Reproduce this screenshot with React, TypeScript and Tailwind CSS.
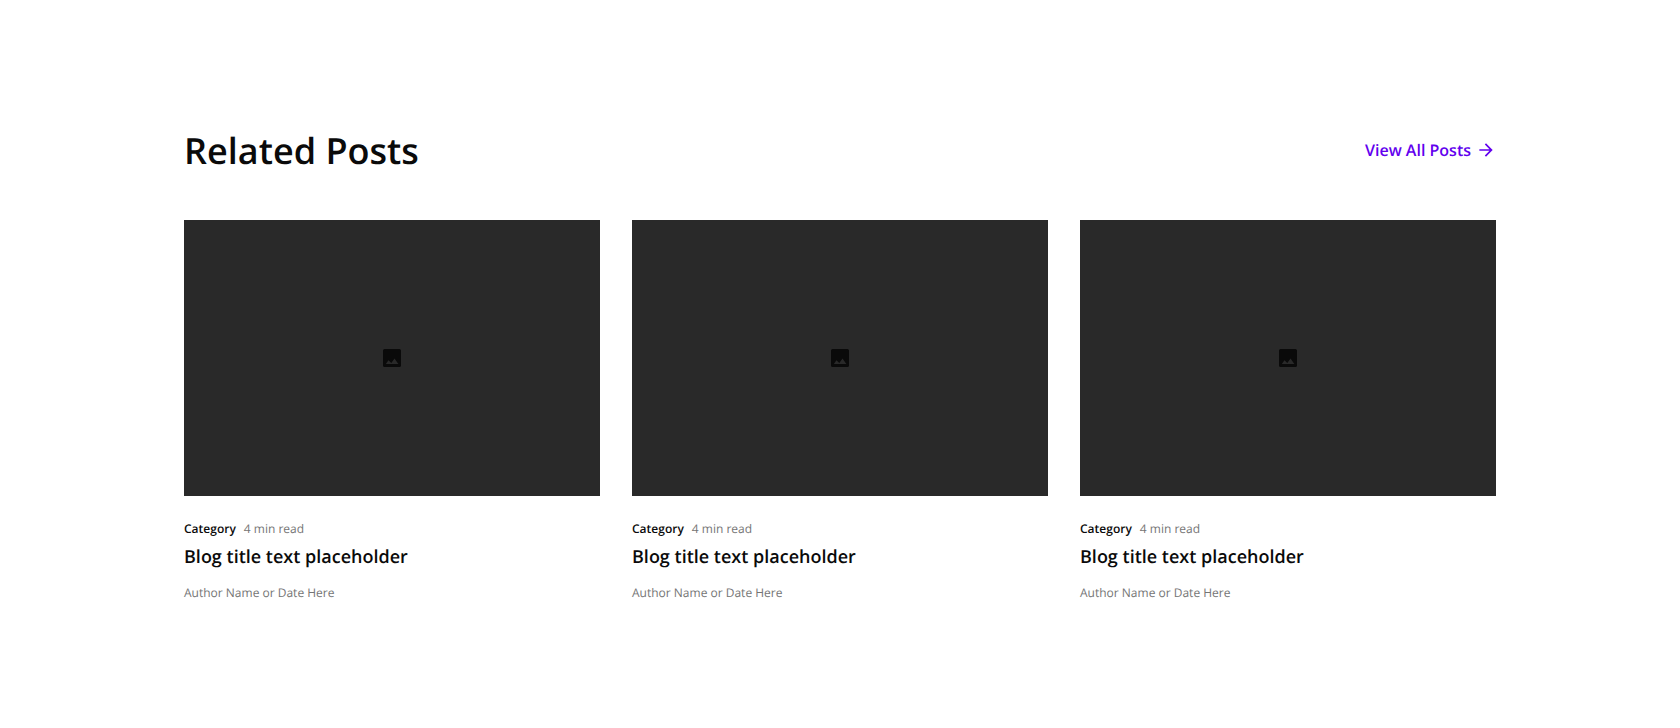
import React from "react";

function ImageIcon() {
  return (
    <svg width="24" height="24" viewBox="0 0 24 24" className="text-[#0a0a0a]">
      <path
        fill="currentColor"
        fillRule="evenodd"
        d="M4.6 3h14.8A1.6 1.6 0 0 1 21 4.6v14.8a1.6 1.6 0 0 1-1.6 1.6H4.6A1.6 1.6 0 0 1 3 19.4V4.6A1.6 1.6 0 0 1 4.6 3ZM5.8 18h12.6l-3.9-5.4-3.2 4.5L8.5 14.2 5.8 18Z"
      />
    </svg>
  );
}

function ArrowIcon() {
  return (
    <svg width="20" height="20" viewBox="0 0 24 24" fill="currentColor">
      <path d="M12 4l-1.41 1.41L16.17 11H4v2h12.17l-5.58 5.59L12 20l8-8z" />
    </svg>
  );
}

const posts = [
  { id: 1, category: "Category", read: "4 min read", title: "Blog title text placeholder", meta: "Author Name or Date Here" },
  { id: 2, category: "Category", read: "4 min read", title: "Blog title text placeholder", meta: "Author Name or Date Here" },
  { id: 3, category: "Category", read: "4 min read", title: "Blog title text placeholder", meta: "Author Name or Date Here" },
];

export default function App() {
  return (
    <section className="min-h-screen bg-white px-46 pt-32 font-['Open_Sans',sans-serif] text-[#0a0a0a] antialiased [text-rendering:geometricPrecision]">
      <header className="flex h-11 items-center justify-between">
        <h2 className="pt-0.5 text-4xl font-semibold">Related Posts</h2>
        <a href="#" className="flex items-center gap-[5px] text-base font-semibold text-[#6200ee]">
          View All Posts
          <ArrowIcon />
        </a>
      </header>
      <div className="mt-12 grid grid-cols-3 gap-8">
        {posts.map((post) => (
          <article key={post.id}>
            <div className="flex h-[276px] items-center justify-center bg-[#292929]">
              <ImageIcon />
            </div>
            <div className="mt-6 flex items-center gap-2 text-xs leading-[18px]">
              <span className="font-semibold">{post.category}</span>
              <span className="text-[#757575]">{post.read}</span>
            </div>
            <h3 className="mt-[5px] text-lg leading-7 font-semibold">{post.title}</h3>
            <p className="mt-[13px] text-xs leading-[18px] text-[#757575]">{post.meta}</p>
          </article>
        ))}
      </div>
    </section>
  );
}
